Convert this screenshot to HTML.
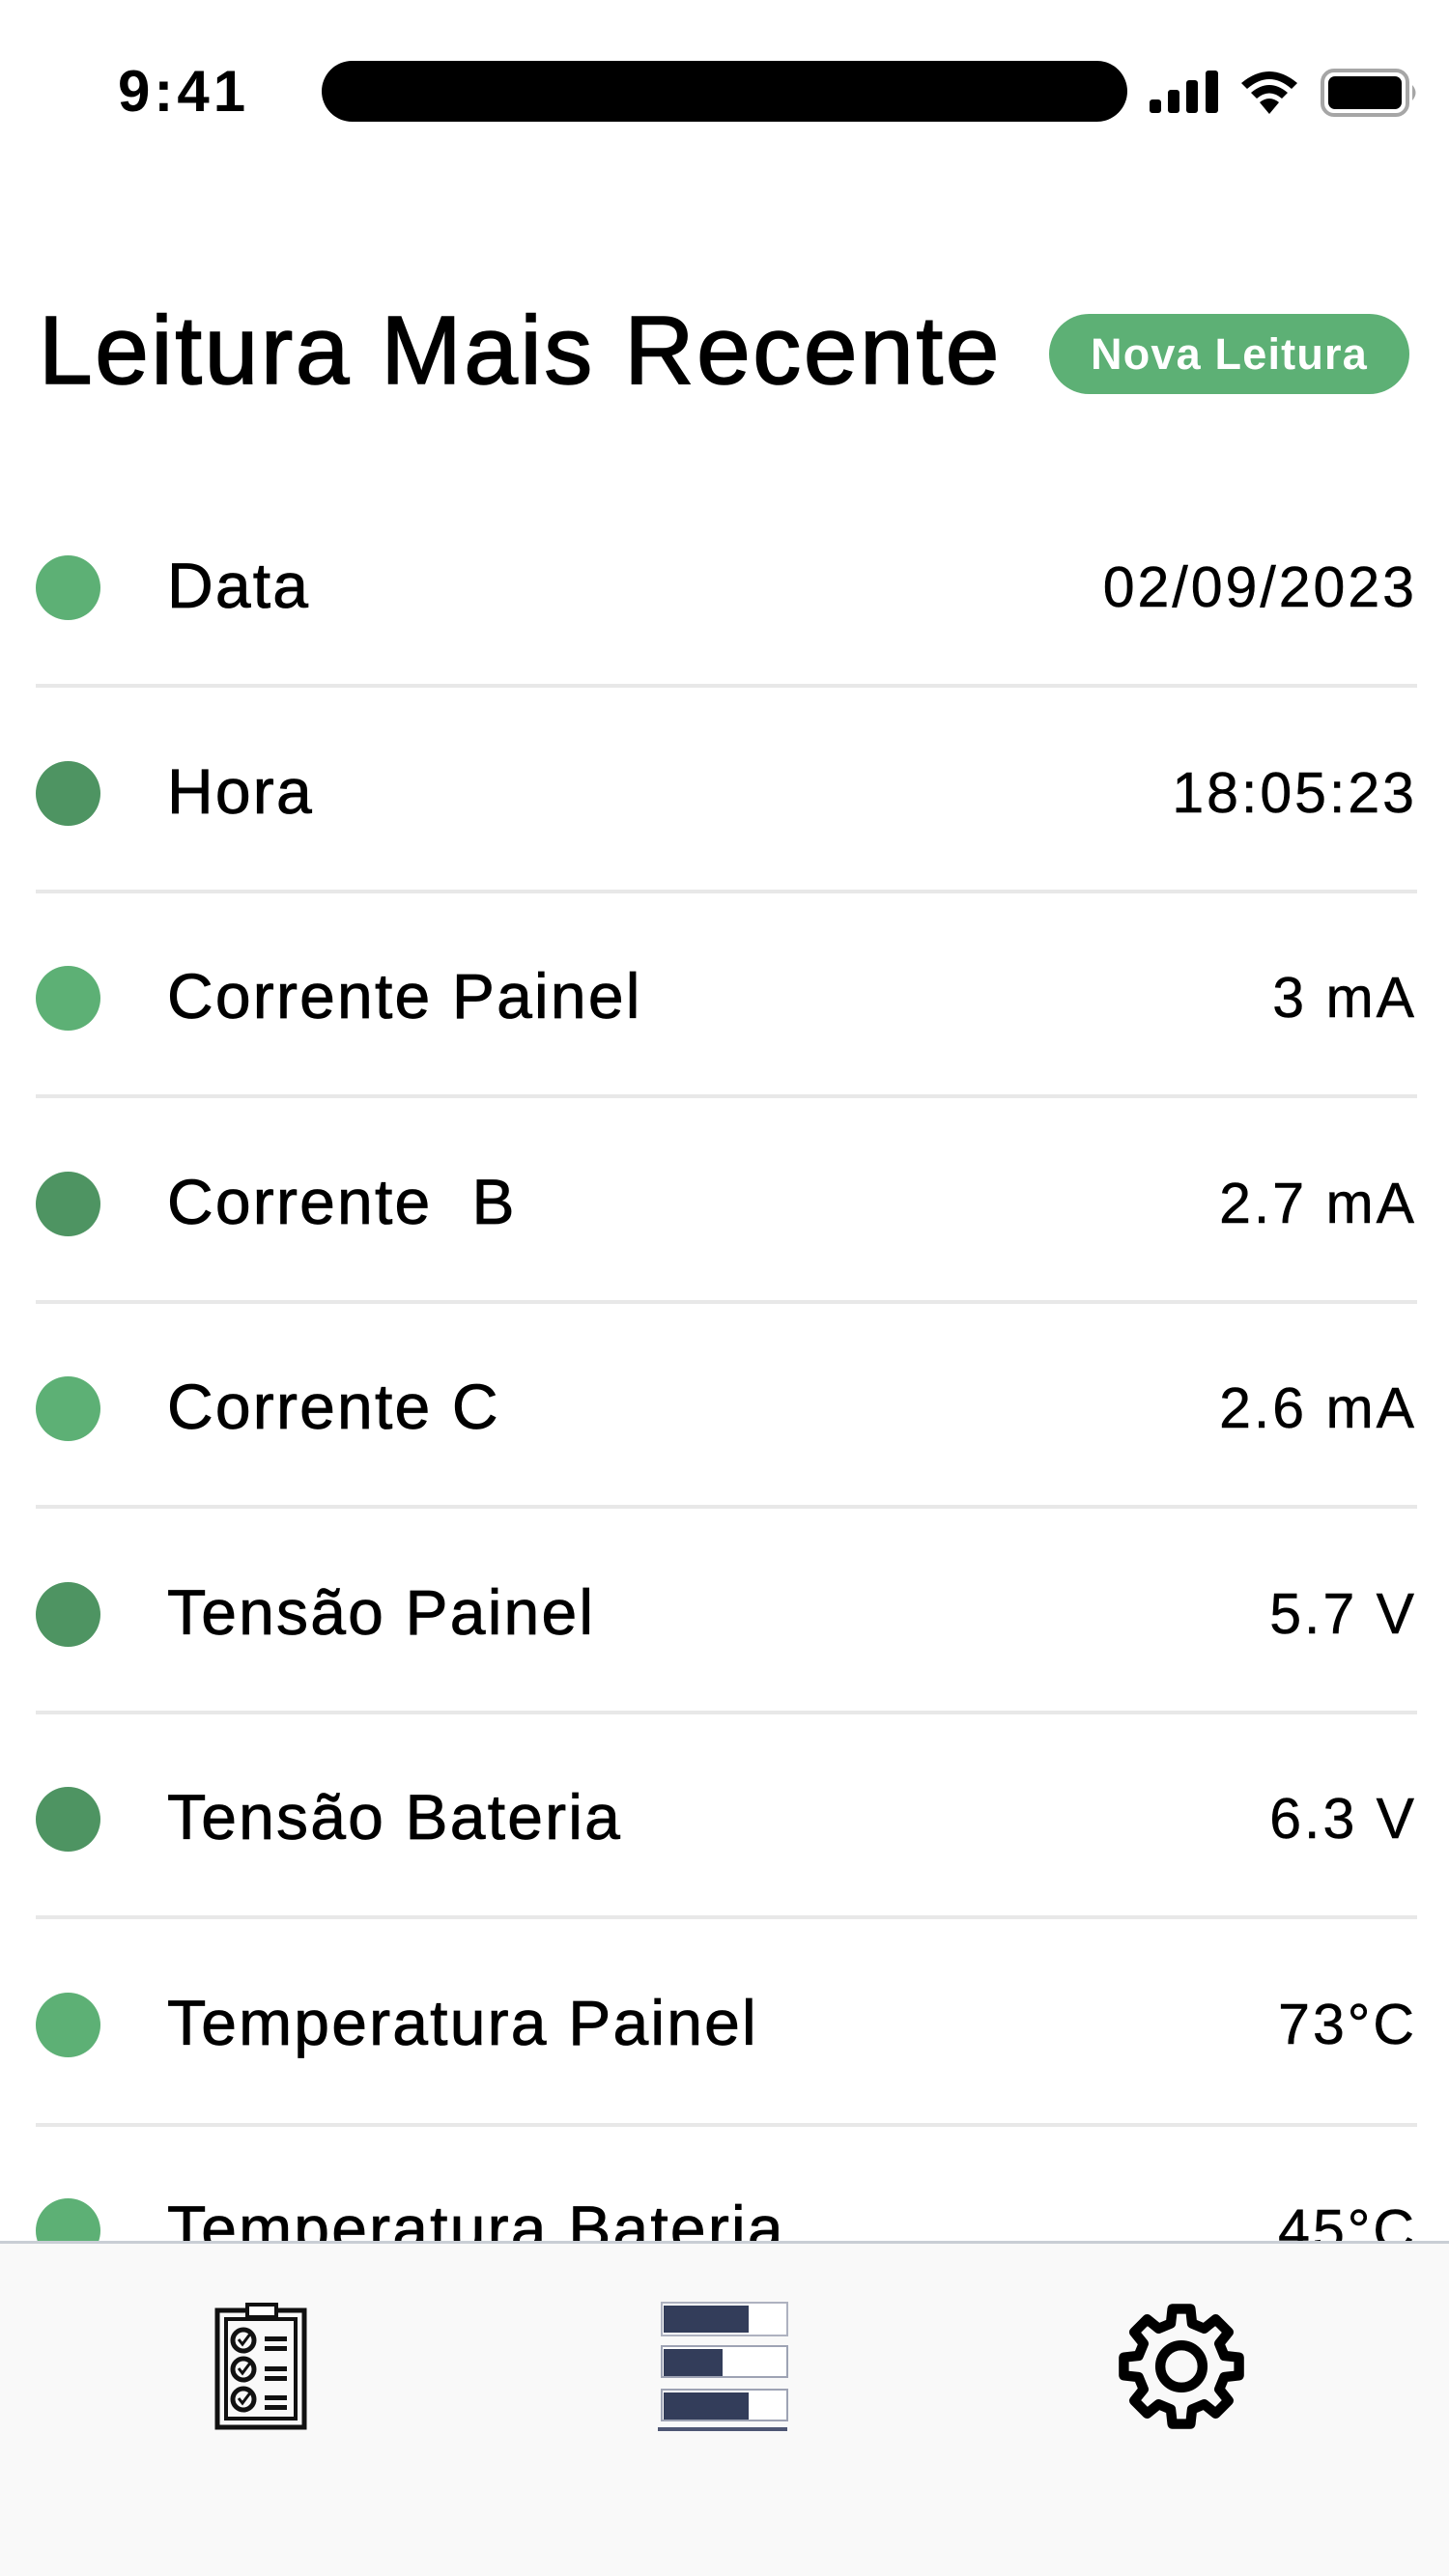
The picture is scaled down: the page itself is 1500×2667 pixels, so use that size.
<!DOCTYPE html>
<html><head><meta charset="utf-8">
<style>
*{margin:0;padding:0;box-sizing:border-box}
body{width:1500px;height:2667px;background:#fff;position:relative;overflow:hidden;font-family:"Liberation Sans",sans-serif;color:#000}
.abs{position:absolute}
.time{left:122px;top:60px;font-size:60px;font-weight:700;line-height:70px;letter-spacing:4px}
.pill{left:333px;top:63px;width:834px;height:63px;background:#000;border-radius:32px}
.title{left:40px;top:298px;font-size:100px;line-height:130px;white-space:nowrap;letter-spacing:2.6px;-webkit-text-stroke:1.6px #000}
.btn{left:1086px;top:325px;width:373px;height:83px;background:#5db075;border-radius:42px;color:#fff;font-weight:700;font-size:45px;line-height:83px;text-align:center;letter-spacing:1.2px}
.dot{width:67px;height:67px;border-radius:50%}
.l{background:#5db075}.d{background:#4e9462}
.lab{left:173px;font-size:66px;line-height:80px;white-space:nowrap;letter-spacing:2.2px;-webkit-text-stroke:0.8px #000;margin-top:-2px}
.val{right:36px;font-size:59px;line-height:80px;white-space:nowrap;text-align:right;letter-spacing:3px;-webkit-text-stroke:0.5px #000;margin-right:-3px}
.sep{left:37px;width:1430px;height:4px;background:#e8e8e8}
.nav{left:0;top:2320px;width:1500px;height:347px;background:#f9f9f9;border-top:3px solid #c9ced5}
</style></head><body>
<div class="abs time">9:41</div>
<div class="abs pill"></div>
<svg class="abs" style="left:1185px;top:65px" width="290" height="60" viewBox="1185 65 290 60">
<rect x="1190" y="103" width="12" height="14" rx="3"/>
<rect x="1209" y="93" width="12" height="24" rx="3"/>
<rect x="1228" y="83" width="12" height="34" rx="3"/>
<rect x="1248" y="73" width="13" height="44" rx="3"/>
<path d="M1285 86 Q1314 62 1343 86 L1337 92 Q1314 72 1291 92Z M1295 96 Q1314 80 1333 96 L1327 102 Q1314 91 1301 102Z M1304 106 Q1314 98 1324 106 L1314 118Z"/>
<rect x="1369" y="73" width="88" height="46" rx="12" fill="none" stroke="#a6a6a6" stroke-width="4"/>
<rect x="1375" y="79" width="76" height="34" rx="7"/>
<path d="M1462 88 Q1469 96 1462 104Z" fill="#a6a6a6"/>
</svg>
<div class="abs title">Leitura Mais Recente</div>
<div class="abs btn">Nova Leitura</div>

<div class="abs dot l" style="left:37px;top:575px"></div><div class="abs lab" style="top:568px">Data</div><div class="abs val" style="top:568px">02/09/2023</div><div class="abs sep" style="top:708px"></div>
<div class="abs dot d" style="left:37px;top:788px"></div><div class="abs lab" style="top:781px">Hora</div><div class="abs val" style="top:781px">18:05:23</div><div class="abs sep" style="top:921px"></div>
<div class="abs dot l" style="left:37px;top:1000px"></div><div class="abs lab" style="top:993px">Corrente Painel</div><div class="abs val" style="top:993px">3 mA</div><div class="abs sep" style="top:1133px"></div>
<div class="abs dot d" style="left:37px;top:1213px"></div><div class="abs lab" style="top:1206px">Corrente&nbsp; B</div><div class="abs val" style="top:1206px">2.7 mA</div><div class="abs sep" style="top:1346px"></div>
<div class="abs dot l" style="left:37px;top:1425px"></div><div class="abs lab" style="top:1418px">Corrente C</div><div class="abs val" style="top:1418px">2.6 mA</div><div class="abs sep" style="top:1558px"></div>
<div class="abs dot d" style="left:37px;top:1638px"></div><div class="abs lab" style="top:1631px">Tensão Painel</div><div class="abs val" style="top:1631px">5.7 V</div><div class="abs sep" style="top:1771px"></div>
<div class="abs dot d" style="left:37px;top:1850px"></div><div class="abs lab" style="top:1843px">Tensão Bateria</div><div class="abs val" style="top:1843px">6.3 V</div><div class="abs sep" style="top:1983px"></div>
<div class="abs dot l" style="left:37px;top:2063px"></div><div class="abs lab" style="top:2056px">Temperatura Painel</div><div class="abs val" style="top:2056px">73°C</div><div class="abs sep" style="top:2198px"></div>
<div class="abs dot l" style="left:37px;top:2276px"></div><div class="abs lab" style="top:2269px">Temperatura Bateria</div><div class="abs val" style="top:2269px">45°C</div>

<div class="abs nav"></div>
<svg class="abs" style="left:0;top:2320px" width="1500" height="347" viewBox="0 2320 1500 347">
<g fill="none" stroke="#111">
<rect x="225" y="2392" width="90" height="121" stroke-width="5"/>
<rect x="234" y="2401" width="72" height="103" stroke-width="4"/>
<rect x="256" y="2386" width="30" height="13" stroke-width="4" fill="#fff"/>
<circle cx="252" cy="2423" r="11" stroke-width="5"/>
<circle cx="252" cy="2453" r="11" stroke-width="5"/>
<circle cx="252" cy="2484" r="11" stroke-width="5"/>
<path d="M247 2422l4 5 9-12M247 2452l4 5 9-12M247 2483l4 5 9-12" stroke-width="3"/>
</g>
<g fill="#111">
<rect x="274" y="2419" width="23" height="5"/><rect x="274" y="2429" width="23" height="5"/>
<rect x="274" y="2450" width="23" height="5"/><rect x="274" y="2460" width="23" height="5"/>
<rect x="274" y="2480" width="23" height="5"/><rect x="274" y="2490" width="23" height="5"/>
</g>
<g>
<rect x="685" y="2384" width="130" height="34" fill="#fff" stroke="#aeb2c0" stroke-width="2"/>
<rect x="687" y="2387" width="88" height="28" fill="#333d5a"/>
<rect x="685" y="2429" width="130" height="32" fill="#fff" stroke="#9ea3b4" stroke-width="2"/>
<rect x="687" y="2432" width="61" height="28" fill="#333d5a"/>
<rect x="685" y="2474" width="130" height="32" fill="#fff" stroke="#9ea3b4" stroke-width="2"/>
<rect x="687" y="2477" width="88" height="28" fill="#333d5a"/>
<rect x="681" y="2513" width="134" height="4" fill="#4e5674"/>
</g>
<g transform="translate(1223 2450) scale(1.04)" fill="none" stroke="#000" stroke-width="10" stroke-linejoin="round">
<path d="M42.7,-10.6 L57.3,-9 L57.3,9 L42.7,10.6 L37.7,22.7 L46.9,34.1 L34.1,46.9 L22.7,37.7 L10.6,42.7 L9,57.3 L-9,57.3 L-10.6,42.7 L-22.7,37.7 L-34.1,46.9 L-46.9,34.1 L-37.7,22.7 L-42.7,10.6 L-57.3,9 L-57.3,-9 L-42.7,-10.6 L-37.7,-22.7 L-46.9,-34.1 L-34.1,-46.9 L-22.7,-37.7 L-10.6,-42.7 L-9,-57.3 L9,-57.3 L10.6,-42.7 L22.7,-37.7 L34.1,-46.9 L46.9,-34.1 L37.7,-22.7 Z"/>
<circle r="21"/>
</g>
</svg>
</body></html>
